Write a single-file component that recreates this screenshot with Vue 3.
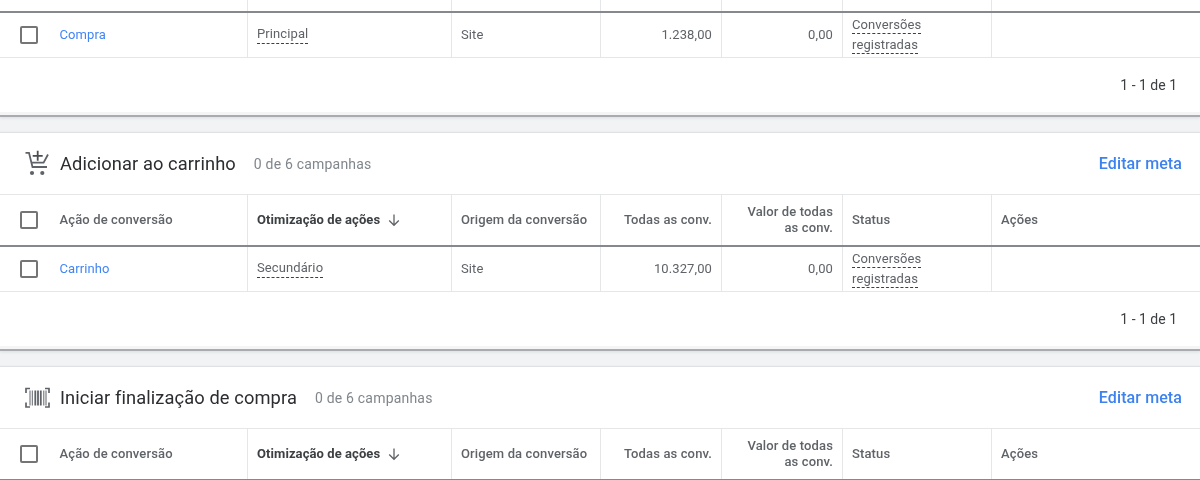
<script setup>
const columns = [
  { label: 'Ação de conversão' },
  { label: 'Otimização de ações', sorted: true },
  { label: 'Origem da conversão' },
  { label: 'Todas as conv.', right: true },
  { label: 'Valor de todas as conv.', right: true, narrow: true },
  { label: 'Status' },
  { label: 'Ações' }
]
const sections = [
  { id: 'compra', stub: true, action: 'Compra', opt: 'Principal', total: '1.238,00' },
  { id: 'cart', title: 'Adicionar ao carrinho', icon: 'cart', action: 'Carrinho', opt: 'Secundário', total: '10.327,00' },
  { id: 'checkout', title: 'Iniciar finalização de compra', icon: 'barcode', headerOnly: true }
]
</script>

<template>
  <div class="page">
    <section v-for="s in sections" :key="s.id" class="card" :class="{ first: s.stub }">
      <header v-if="s.title" class="card-head">
        <svg v-if="s.icon === 'cart'" class="head-icon" viewBox="0 0 28 28" width="28" height="28">
          <path d="M2.500 2.800H6L9.500 17H24" fill="none" stroke="#5f6368" stroke-width="1.800"/>
          <path d="M25 4.500 20.600 12.600H8" fill="none" stroke="#5f6368" stroke-width="1.800"/>
          <path d="M14.700.8v10M9.700 5.800h10" fill="none" stroke="#4a4e52" stroke-width="1.800"/>
          <circle cx="9" cy="23" r="2.100" fill="#5f6368"/>
          <circle cx="19.300" cy="23" r="2.100" fill="#5f6368"/>
        </svg>
        <svg v-else class="head-icon" viewBox="0 0 28 28" width="28" height="28">
          <path d="M7 4.500H3V9M22 4.500h4V9M3 18.500v4.500h4M26 18.500v4.500h-4" fill="none" stroke="#5f6368" stroke-width="1.700"/>
          <path d="M7 6.500v15M9.300 6.500v15M20.800 6.500v15M23 6.500v15" fill="none" stroke="#5f6368" stroke-width="1"/>
          <path d="M12.300 6.500v15M15 6.500v15M17.800 6.500v15" fill="none" stroke="#5f6368" stroke-width="1.800"/>
        </svg>
        <h2 class="title">{{ s.title }}</h2>
        <span class="count">0 de 6 campanhas</span>
        <a class="edit">Editar meta</a>
      </header>

      <div v-if="s.stub" class="row stub">
        <div v-for="c in columns" :key="c.label" class="cell"></div>
      </div>
      <div v-else class="row head">
        <div v-for="c in columns" :key="c.label" class="cell" :class="{ right: c.right, narrow: c.narrow, strong: c.sorted }">
          <span v-if="c.label === columns[0].label" class="box"></span>
          <span class="label">{{ c.label }}</span>
          <svg v-if="c.sorted" class="arrow" viewBox="0 0 14 14" width="14" height="14">
            <path d="M7 1.500v10.500M2.200 7.500 7 12.300l4.800-4.800" fill="none" stroke="#5f6368" stroke-width="1.300"/>
          </svg>
        </div>
      </div>

      <template v-if="!s.headerOnly">
        <div class="row body">
          <div class="cell"><span class="box"></span><a class="link">{{ s.action }}</a></div>
          <div class="cell"><span class="dashed">{{ s.opt }}</span></div>
          <div class="cell">Site</div>
          <div class="cell right">{{ s.total }}</div>
          <div class="cell right">0,00</div>
          <div class="cell status"><span class="dashed">Conversões</span><span class="dashed">registradas</span></div>
          <div class="cell"></div>
        </div>
        <div class="pager">1 - 1 de 1</div>
      </template>
    </section>
  </div>
</template>

<style>
html, body { margin: 0; background: #fff; height: 480px; overflow: hidden; }
</style>

<style scoped>
.page {
  width: 1200px;
  height: 484px;
  overflow: hidden;
  background: #f1f3f4;
  font-family: Roboto, "Liberation Sans", sans-serif;
  font-size: 13px;
  color: #5f6368;
  filter: blur(0.35px);
}
.card {
  background: #fff;
  border-top: 1px solid #dfe1e5;
  border-bottom: 2px solid #a9abae;
  margin-bottom: 15px;
  box-shadow: 0 1px 3px rgba(60, 64, 67, 0.12);
}
.card.first { border-top: 0; }
.card-head {
  display: flex;
  align-items: center;
  height: 62px;
  padding: 0 18px 0 23px;
  border-bottom: 1px solid #e4e6e8;
  box-sizing: border-box;
}
.head-icon { flex: none; margin-right: 9px; }
.title {
  margin: 0;
  font-size: 18.300px;
  font-weight: 400;
  color: #2b2d30;
  letter-spacing: 0.1px;
}
.count {
  margin-left: 18px;
  font-size: 14px;
  color: #80868b;
  letter-spacing: 0.2px;
}
.edit {
  margin-left: auto;
  font-size: 16px;
  font-weight: 500;
  color: #3d82ee;
  letter-spacing: 0.1px;
}
.row {
  display: grid;
  grid-template-columns: 248px 204px 149px 121px 121px 149px 1fr;
}
.cell {
  display: flex;
  align-items: center;
  box-sizing: border-box;
  padding: 0 9px;
  border-right: 1px solid #e4e6e8;
  min-width: 0;
}
.cell:first-child { padding-left: 20px; }
.cell:last-child { border-right: 0; }
.stub {
  height: 13px;
  border-bottom: 2px solid #85888c;
  box-sizing: border-box;
}
.head {
  height: 52px;
  box-sizing: border-box;
  border-bottom: 2px solid #85888c;
  font-weight: 500;
  font-size: 13px;
  letter-spacing: 0.13px;
}
.head .cell { padding-bottom: 1px; }
.head .strong { color: #3c4043; font-weight: 700; letter-spacing: 0.08px; }
.body {
  height: 45px;
  box-sizing: border-box;
  border-bottom: 1px solid #e4e6e8;
  letter-spacing: 0.1px;
}
.body .cell { padding-bottom: 1px; }
.body .status { padding: 0 9px; }
.right { justify-content: flex-end; text-align: right; }
.narrow .label { width: 92px; line-height: 16px; }
.box {
  flex: none;
  width: 14px;
  height: 14px;
  border: 2px solid #757575;
  border-radius: 2px;
  margin-right: 21.500px;
}
.arrow { margin-left: 7px; }
.link { color: #4285f4; }
.dashed {
  border-bottom: 1px dashed #3c4043;
  line-height: 17px;
}
.body .cell > .dashed { padding-bottom: 1px; }
.body .status > .dashed { padding-bottom: 0; }
.status {
  flex-direction: column;
  align-items: flex-start;
  justify-content: center;
  gap: 2px;
}
.pager {
  height: 57px;
  box-sizing: border-box;
  padding: 0 23px 1px 0;
  display: flex;
  align-items: center;
  justify-content: flex-end;
  font-size: 14px;
  color: #3c4043;
  border-bottom: 3px solid #f5f5f6;
}
</style>
